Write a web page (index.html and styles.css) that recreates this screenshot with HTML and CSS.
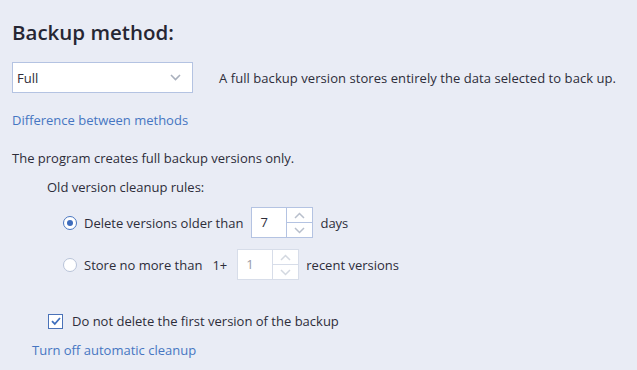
FILE: index.html
```html
<!DOCTYPE html>
<html>
<head>
  <title>Backup method</title>
  <meta name="viewport" content="width=device-width, initial-scale=1.0">
  <link rel="stylesheet" href="styles.css">
</head>
<body>
  <h1 class="title">Backup method:</h1>

  <div class="method-row">
    <div class="select">
      <span>Full</span>
      <svg class="chev" width="11" height="7" viewBox="0 0 11 7"><polyline points="1,1 5.5,5.5 10,1" fill="none" stroke="#a9b0bd" stroke-width="1.6"/></svg>
    </div>
    <div class="method-desc">A full backup version stores entirely the data selected to back up.</div>
  </div>

  <a class="link link-diff" href="#">Difference between methods</a>

  <p class="info">The program creates full backup versions only.</p>

  <div class="rules">
    <div class="rules-label">Old version cleanup rules:</div>

    <div class="rule rule-first">
      <span class="radio checked"></span>
      <span class="rule-text">Delete versions older than</span>
      <div class="spin">
        <div class="spin-value">7</div>
        <div class="spin-btns">
          <div class="spin-btn"><svg width="11" height="7" viewBox="0 0 11 7"><polyline points="1,6 5.5,1.5 10,6" fill="none" stroke="#b8bfcc" stroke-width="1.5"/></svg></div>
          <div class="spin-btn"><svg width="11" height="7" viewBox="0 0 11 7"><polyline points="1,1 5.5,5.5 10,1" fill="none" stroke="#b8bfcc" stroke-width="1.5"/></svg></div>
        </div>
      </div>
      <span class="rule-after">days</span>
    </div>

    <div class="rule rule-second">
      <span class="radio"></span>
      <span class="rule-text">Store no more than</span>
      <span class="prefix">1+</span>
      <div class="spin disabled">
        <div class="spin-value">1</div>
        <div class="spin-btns">
          <div class="spin-btn"><svg width="11" height="7" viewBox="0 0 11 7"><polyline points="1,6 5.5,1.5 10,6" fill="none" stroke="#d3d8e0" stroke-width="1.5"/></svg></div>
          <div class="spin-btn"><svg width="11" height="7" viewBox="0 0 11 7"><polyline points="1,1 5.5,5.5 10,1" fill="none" stroke="#d3d8e0" stroke-width="1.5"/></svg></div>
        </div>
      </div>
      <span class="rule-after">recent versions</span>
    </div>
  </div>

  <label class="keep-first">
    <span class="checkbox">
      <svg width="12" height="12" viewBox="0 0 12 12"><polyline points="2,6.2 4.8,9 10,3" fill="none" stroke="#3f6fbd" stroke-width="1.8"/></svg>
    </span>
    <span>Do not delete the first version of the backup</span>
  </label>

  <a class="link link-off" href="#">Turn off automatic cleanup</a>
</body>
</html>
```

FILE: styles.css
```css
body {
  margin: 0;
  padding: 0 12px;
  background-color: #e9ecf5;
  color: #2d2d3a;
  font-family: 'Open Sans', 'Noto Sans', sans-serif;
  font-size: 13px;
  line-height: 20px;
}

.title {
  margin: 18px 0 0;
  font-size: 20.5px;
  line-height: 28px;
  font-weight: 600;
  color: #262633;
}

.method-row {
  display: flex;
  align-items: center;
  margin-top: 16px;
}

.select {
  width: 181px;
  height: 31px;
  box-sizing: border-box;
  border: 1px solid #b4c3e2;
  background: white;
  display: flex;
  align-items: center;
  justify-content: space-between;
  padding: 0 11px 0 4px;
}

.method-desc {
  margin-left: 26px;
  letter-spacing: 0.06px;
}

.link {
  display: block;
  color: #4676c2;
  text-decoration: none;
}

.link-diff {
  margin-top: 17px;
}

.info {
  margin: 18px 0 0;
}

.rules {
  padding-left: 35px;
}

.rules-label {
  margin-top: 9px;
}

.rule {
  display: flex;
  align-items: center;
  padding-left: 16px;
  height: 31px;
}

.rule-first {
  margin-top: 10px;
}

.rule-second {
  margin-top: 11px;
}

.radio {
  width: 14px;
  height: 14px;
  box-sizing: border-box;
  border-radius: 50%;
  border: 1px solid #b8c3d8;
  background: white;
  margin-right: 7px;
  display: flex;
  align-items: center;
  justify-content: center;
}

.radio.checked {
  border: 1.5px solid #4a76c0;
}

.radio.checked::after {
  content: '';
  width: 6px;
  height: 6px;
  border-radius: 50%;
  background: #3e6cbc;
}

.prefix {
  margin-left: 10px;
}

.spin {
  display: flex;
  width: 62px;
  height: 31px;
  box-sizing: border-box;
  border: 1px solid #b4c3e2;
  background: white;
  margin-left: 8px;
}

.rule-second .spin {
  margin-left: 10px;
}

.spin-value {
  width: 35px;
  box-sizing: border-box;
  padding-left: 8px;
  line-height: 29px;
  border-right: 1px solid #b4c3e2;
}

.spin-btns {
  flex: 1;
  display: flex;
  flex-direction: column;
}

.spin-btn {
  flex: 1;
  display: flex;
  align-items: center;
  justify-content: center;
}

.spin-btn + .spin-btn {
  border-top: 1px solid #b4c3e2;
}

.spin.disabled {
  border-color: #d7dde9;
}

.spin.disabled .spin-value {
  border-right-color: #d7dde9;
  color: #9a9aa6;
}

.spin.disabled .spin-btn + .spin-btn {
  border-top-color: #d7dde9;
}

.rule-after {
  margin-left: 7px;
}

.keep-first {
  display: flex;
  align-items: center;
  margin-top: 31px;
  padding-left: 36px;
  height: 20px;
}

.checkbox {
  width: 15px;
  height: 15px;
  box-sizing: border-box;
  border: 1px solid #4a72b8;
  background: white;
  margin-right: 9px;
  display: flex;
  align-items: center;
  justify-content: center;
}

.link-off {
  margin-top: 9px;
  padding-left: 20px;
}
```
